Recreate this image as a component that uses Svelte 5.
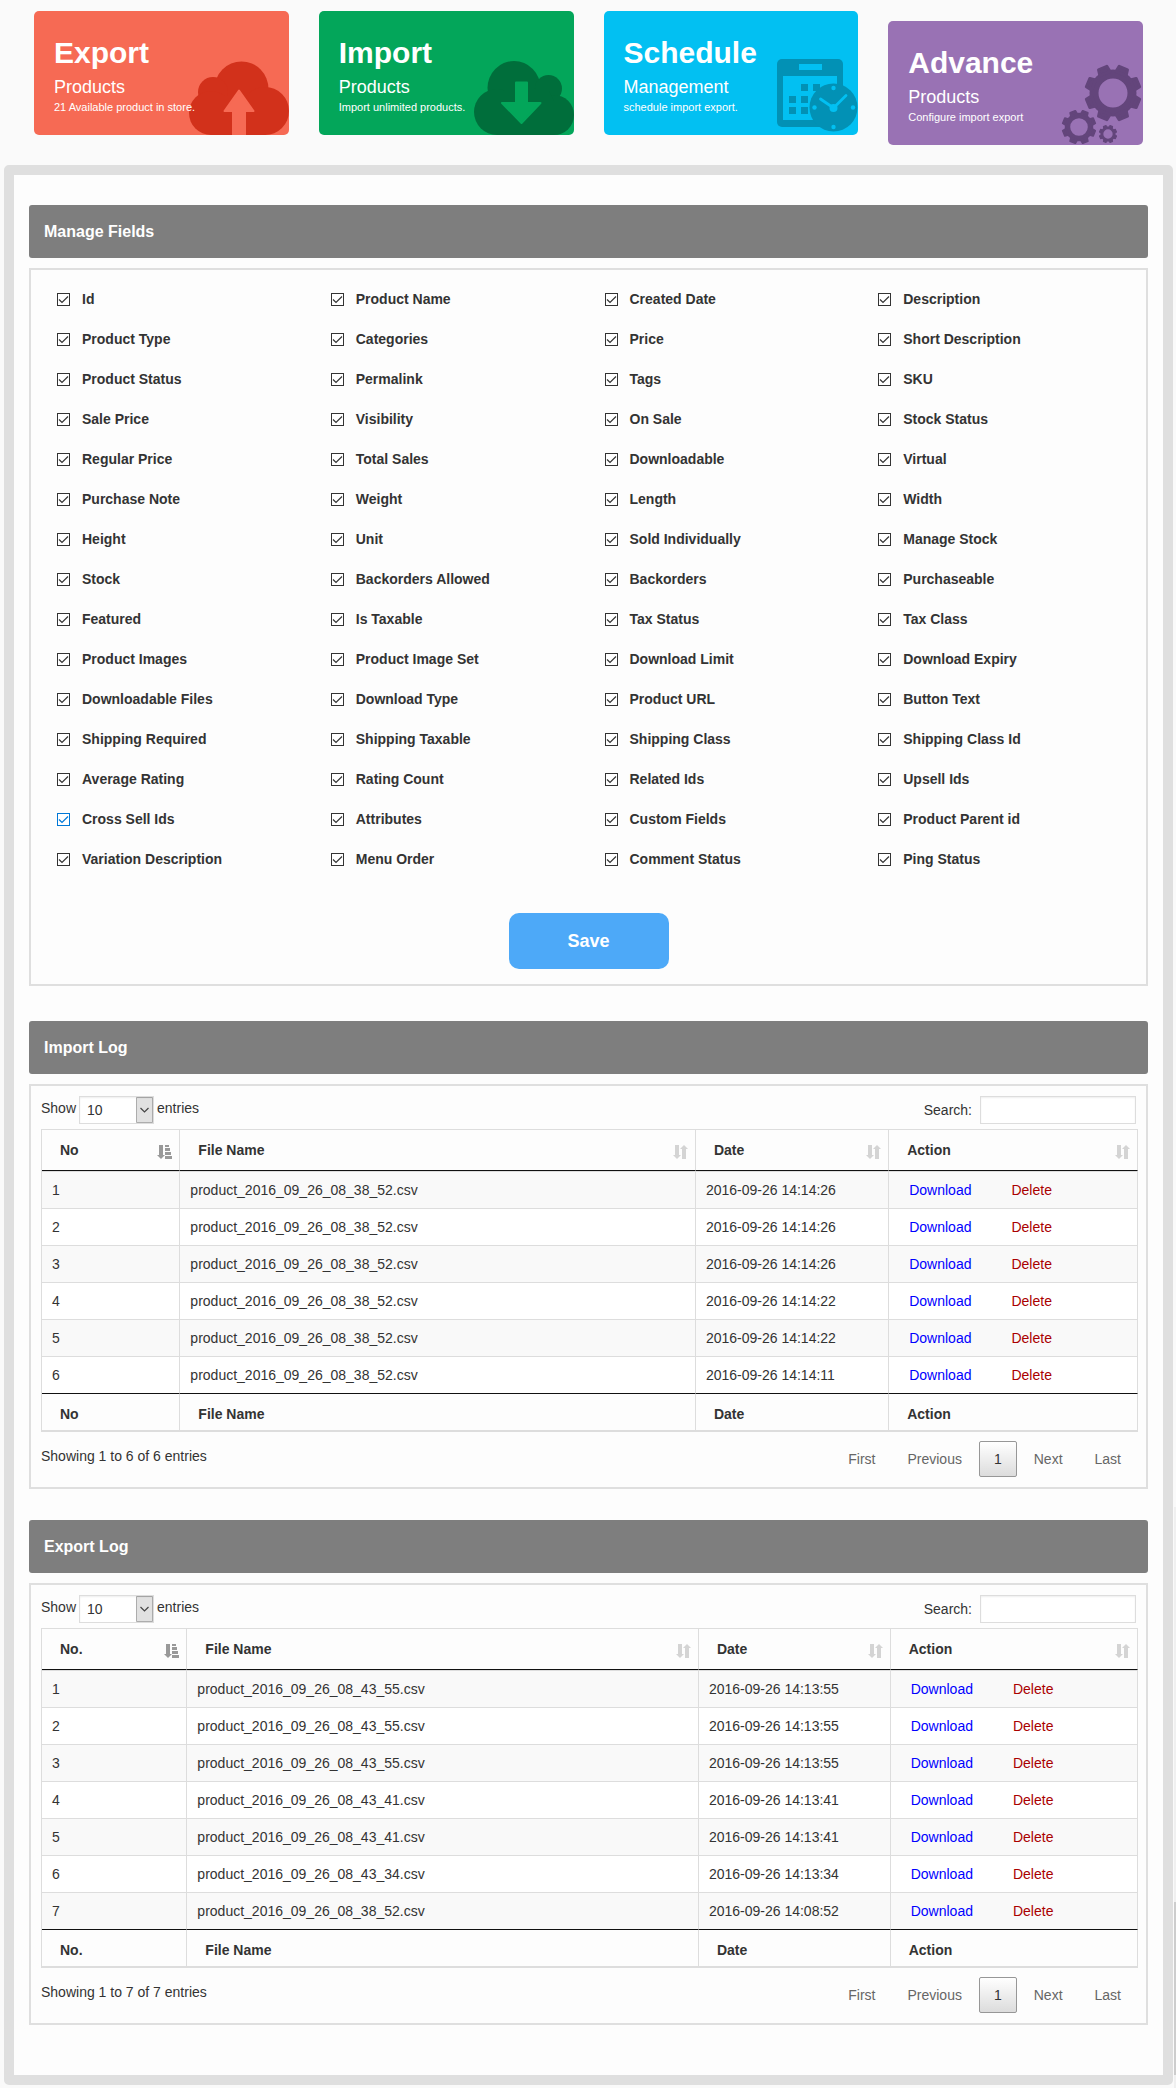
<script>
  const fields = [
    'Id', 'Product Name', 'Created Date', 'Description',
    'Product Type', 'Categories', 'Price', 'Short Description',
    'Product Status', 'Permalink', 'Tags', 'SKU',
    'Sale Price', 'Visibility', 'On Sale', 'Stock Status',
    'Regular Price', 'Total Sales', 'Downloadable', 'Virtual',
    'Purchase Note', 'Weight', 'Length', 'Width',
    'Height', 'Unit', 'Sold Individually', 'Manage Stock',
    'Stock', 'Backorders Allowed', 'Backorders', 'Purchaseable',
    'Featured', 'Is Taxable', 'Tax Status', 'Tax Class',
    'Product Images', 'Product Image Set', 'Download Limit', 'Download Expiry',
    'Downloadable Files', 'Download Type', 'Product URL', 'Button Text',
    'Shipping Required', 'Shipping Taxable', 'Shipping Class', 'Shipping Class Id',
    'Average Rating', 'Rating Count', 'Related Ids', 'Upsell Ids',
    'Cross Sell Ids', 'Attributes', 'Custom Fields', 'Product Parent id',
    'Variation Description', 'Menu Order', 'Comment Status', 'Ping Status'
  ];
  const activeField = 'Cross Sell Ids';

  const cards = [
    { kind: 'export', title: 'Export', sub: 'Products', note: '21 Available product in store.' },
    { kind: 'import', title: 'Import', sub: 'Products', note: 'Import unlimited products.' },
    { kind: 'schedule', title: 'Schedule', sub: 'Management', note: 'schedule import export.' },
    { kind: 'advance', title: 'Advance', sub: 'Products', note: 'Configure import export' }
  ];

  const logs = [
    {
      id: 'import',
      title: 'Import Log',
      columns: ['No', 'File Name', 'Date', 'Action'],
      shares: [277, 1032, 387, 498],
      rows: [
        ['product_2016_09_26_08_38_52.csv', '2016-09-26 14:14:26'],
        ['product_2016_09_26_08_38_52.csv', '2016-09-26 14:14:26'],
        ['product_2016_09_26_08_38_52.csv', '2016-09-26 14:14:26'],
        ['product_2016_09_26_08_38_52.csv', '2016-09-26 14:14:22'],
        ['product_2016_09_26_08_38_52.csv', '2016-09-26 14:14:22'],
        ['product_2016_09_26_08_38_52.csv', '2016-09-26 14:14:11']
      ]
    },
    {
      id: 'export',
      title: 'Export Log',
      columns: ['No.', 'File Name', 'Date', 'Action'],
      shares: [291, 1024, 384, 495],
      rows: [
        ['product_2016_09_26_08_43_55.csv', '2016-09-26 14:13:55'],
        ['product_2016_09_26_08_43_55.csv', '2016-09-26 14:13:55'],
        ['product_2016_09_26_08_43_55.csv', '2016-09-26 14:13:55'],
        ['product_2016_09_26_08_43_41.csv', '2016-09-26 14:13:41'],
        ['product_2016_09_26_08_43_41.csv', '2016-09-26 14:13:41'],
        ['product_2016_09_26_08_43_34.csv', '2016-09-26 14:13:34'],
        ['product_2016_09_26_08_38_52.csv', '2016-09-26 14:08:52']
      ]
    }
  ];

  const gears = [
    { x: 52, y: 30, r: 28 },
    { x: 18, y: 64, r: 17 },
    { x: 47, y: 71, r: 9 }
  ];
  const teeth = [22.5, 67.5, 112.5, 157.5, 202.5, 247.5, 292.5, 337.5];

  const share = (list, i) => (list[i] / list.reduce((a, b) => a + b, 0)) * 100;
</script>

<div class="page">
  <nav class="cards" aria-label="Sections">
    {#each cards as card}
      <a class="card {card.kind}" href="#{card.kind}">
        {#if card.kind === 'export'}
          <svg class="art" width="100" height="74" viewBox="0 0 100 74" aria-hidden="true">
            <g fill="#d2311b">
              <ellipse cx="52.500" cy="28" rx="27" ry="27.500" />
              <circle cx="24" cy="31" r="15" />
              <ellipse cx="22" cy="52" rx="22" ry="22" />
              <ellipse cx="76" cy="50" rx="24" ry="24" />
              <path d="M22 35h55v39H22z" />
            </g>
            <path d="M50 29.500 64.500 50H56v26H44V50h-8.500z" fill="#f66a54" stroke="#f66a54" stroke-width="2" stroke-linejoin="round" />
          </svg>
        {:else if card.kind === 'import'}
          <svg class="art" width="100" height="74" viewBox="0 0 100 74" aria-hidden="true">
            <g fill="#006e3b">
              <ellipse cx="40" cy="27" rx="26.500" ry="27" />
              <circle cx="74.500" cy="27.500" r="13.500" />
              <circle cx="23" cy="51" r="23" />
              <circle cx="80" cy="54" r="20" />
              <path d="M23 30h52l5 10v34H23z" />
            </g>
            <path d="M42 21.500h11V42h13.500L47.500 62 28 42h14z" fill="#03a65a" stroke="#03a65a" stroke-width="2" stroke-linejoin="round" />
          </svg>
        {:else if card.kind === 'schedule'}
          <svg class="art" width="81" height="77" viewBox="0 0 81 77" aria-hidden="true">
            <rect x="0" y="1" width="66" height="68" rx="5" fill="#0291b5" />
            <path d="M22 6h23v6H22zM6 18h54v44H6z" fill="#02c0f2" />
            <path d="M24 26h7v7h-7zM36 26h7v7h-7zM12 38h7v7h-7zM24 38h7v7h-7zM12 49h7v7h-7zM24 49h7v7h-7z" fill="#0291b5" />
            <circle cx="56.500" cy="49.500" r="24" fill="#0291b5" />
            <g fill="#02c0f2">
              <circle cx="56.500" cy="30" r="2.200" />
              <circle cx="56.500" cy="69" r="2.200" />
              <circle cx="37.500" cy="49.500" r="2.200" />
              <circle cx="76" cy="49.500" r="2.200" />
              <circle cx="56.500" cy="50" r="4" />
            </g>
            <path d="M43.500 41 56.500 50 69 37.500" fill="none" stroke="#02c0f2" stroke-width="2.800" stroke-linecap="round" />
          </svg>
        {:else}
          <svg class="art" width="82" height="82" viewBox="0 0 82 82" aria-hidden="true">
            {#each gears as gear}
              <g transform="translate({gear.x} {gear.y}) scale({gear.r / 28})">
                <circle r="19" fill="none" stroke="#63457b" stroke-width="9" />
                {#each teeth as angle}
                  <path d="M-5.500-21-4.500-27H4.500L5.500-21z" transform="rotate({angle})" fill="#63457b" stroke="#63457b" stroke-width="3" stroke-linejoin="round" />
                {/each}
              </g>
            {/each}
          </svg>
        {/if}
        <strong>{card.title}</strong>
        <span class="sub">{card.sub}</span>
        <span class="note">{card.note}</span>
      </a>
    {/each}
  </nav>

  <main class="frame">
    <section>
      <h2>Manage Fields</h2>
      <form class="box fields" onsubmit={(e) => e.preventDefault()}>
        <div class="grid">
          {#each fields as field}
            <label class="field">
              <input type="checkbox" class:active={field === activeField} checked />
              <span>{field}</span>
            </label>
          {/each}
        </div>
        <button class="save" type="submit">Save</button>
      </form>
    </section>

    {#each logs as log}
      <section>
        <h2>{log.title}</h2>
        <div class="box log">
          <div class="tools">
            <label class="length">
              <span>Show</span>
              <select>
                <option>10</option>
                <option>25</option>
                <option>50</option>
                <option>100</option>
              </select>
              <span>entries</span>
            </label>
            <label class="search">
              <span>Search:</span>
              <input type="search" />
            </label>
          </div>
          <table>
            <colgroup>
              {#each log.columns as _, i}
                <col style="width: {share(log.shares, i)}%" />
              {/each}
            </colgroup>
            <thead>
              <tr>
                {#each log.columns as column, i}
                  <th scope="col">
                    <button class="sort" type="button">
                      <span>{column}</span>
                      {#if i === 0}
                        <svg width="15" height="18" viewBox="0 0 15 18" fill="#999" aria-hidden="true">
                          <path d="M2 4h4v10h2l-4 4-4-4h2zM8 4h4v2H8zM8 7h5v3H8zM8 11h6v3H8zM8 15h7v3H8z" />
                        </svg>
                      {:else}
                        <svg width="15" height="18" viewBox="0 0 15 18" fill="#d4d4d4" aria-hidden="true">
                          <path d="M2 4h4v10h2l-4 4-4-4h2zM11 4l4 4h-2v10H9V8H7z" />
                        </svg>
                      {/if}
                    </button>
                  </th>
                {/each}
              </tr>
            </thead>
            <tbody>
              {#each log.rows as row, i}
                <tr>
                  <td>{i + 1}</td>
                  <td>{row[0]}</td>
                  <td>{row[1]}</td>
                  <td>
                    <div class="actions">
                      <a class="download" href="#download">Download</a>
                      <a class="delete" href="#delete">Delete</a>
                    </div>
                  </td>
                </tr>
              {/each}
            </tbody>
            <tfoot>
              <tr>
                {#each log.columns as column}
                  <th scope="col">{column}</th>
                {/each}
              </tr>
            </tfoot>
          </table>
          <div class="foot">
            <span class="info">Showing 1 to {log.rows.length} of {log.rows.length} entries</span>
            <div class="pager">
              <button type="button">First</button>
              <button type="button">Previous</button>
              <button type="button" class="current" aria-current="page">1</button>
              <button type="button">Next</button>
              <button type="button">Last</button>
            </div>
          </div>
        </div>
      </section>
    {/each}
  </main>
  <div class="track" aria-hidden="true"><div class="thumb"></div></div>
</div>

<style>
  :global(body) {
    background: #fafafa;
  }
  .page, .page * {
    box-sizing: border-box;
  }
  .page {
    position: relative;
    padding: 11px 3px 3px 4px;
    font-family: "Liberation Sans", Arial, sans-serif;
    font-size: 14px;
    line-height: 20px;
    color: #333;
  }
  button, input, select {
    font: inherit;
    color: inherit;
    margin: 0;
  }
  .cards {
    display: grid;
    grid-template-columns: repeat(4, 1fr);
    align-items: start;
    gap: 30px;
    padding: 0 30px 20px;
  }
  .card {
    position: relative;
    display: flex;
    flex-direction: column;
    height: 124px;
    padding: 22px 20px 0;
    border-radius: 5px;
    overflow: hidden;
    color: #fff;
    text-decoration: none;
  }
  .export { background: #f66a54; }
  .import { background: #03a65a; }
  .schedule { background: #02c0f2; }
  .advance { background: #9972b4; margin-top: 10px; }
  .art {
    position: absolute;
    right: 0;
    bottom: 0;
  }
  .card strong {
    font-size: 30px;
    line-height: 40px;
  }
  .sub {
    font-size: 18px;
    line-height: 28px;
  }
  .note {
    position: relative;
    font-size: 11px;
    line-height: 12px;
  }
  .frame {
    border: 10px solid #dfdfdf;
    border-radius: 5px;
    background: #fdfdfd;
    padding: 30px 15px 50px;
  }
  section + section {
    margin-top: 31px;
  }
  section:first-child {
    margin-bottom: 35px;
  }
  section:first-child + section {
    margin-top: 0;
  }
  h2 {
    margin: 0 0 10px;
    padding: 0 15px;
    border-radius: 3px;
    background: #7e7e7e;
    color: #fff;
    font-size: 16px;
    line-height: 53px;
  }
  .box {
    border: 2px solid #dfdfdf;
  }
  .fields {
    display: flex;
    flex-direction: column;
    align-items: center;
    padding: 9px 10px 15px;
  }
  .grid {
    display: grid;
    grid-template-columns: repeat(4, 1fr);
    align-self: stretch;
  }
  .field {
    display: flex;
    align-items: center;
    gap: 12px;
    height: 40px;
    padding-left: 16px;
    font-weight: bold;
  }
  .field input {
    appearance: none;
    width: 13px;
    height: 13px;
    border: 1px solid #333;
    background: #fff url("data:image/svg+xml,%3Csvg xmlns='http://www.w3.org/2000/svg' viewBox='0 0 11 11'%3E%3Cpath d='M1 5.500 4 8.500 10 2.500' fill='none' stroke='%23333' stroke-width='1.200'/%3E%3C/svg%3E") center / 11px 11px no-repeat;
  }
  .field input.active {
    border-color: #0078d7;
    background-image: url("data:image/svg+xml,%3Csvg xmlns='http://www.w3.org/2000/svg' viewBox='0 0 11 11'%3E%3Cpath d='M1 5.500 4 8.500 10 2.500' fill='none' stroke='%230078d7' stroke-width='1.200'/%3E%3C/svg%3E");
  }
  .save {
    width: 160px;
    height: 56px;
    margin-top: 34px;
    border: 0;
    border-radius: 10px;
    background: #4da9f8;
    color: #fff;
    font-size: 18px;
    font-weight: bold;
  }
  .log {
    padding: 10px 8px 10px 10px;
  }
  .tools, .foot {
    display: flex;
    justify-content: space-between;
    align-items: flex-start;
  }
  .tools {
    padding: 0 2px 5px 0;
  }
  .length {
    display: flex;
    gap: 3px;
    line-height: 24px;
  }
  .search {
    display: flex;
    align-items: center;
    gap: 8px;
  }
  select, .search input {
    appearance: none;
    height: 28px;
    border: 1px solid #ddd;
    border-radius: 0;
    background: #fff;
    box-shadow: inset 0 1px 2px rgba(0, 0, 0, 0.07);
  }
  select {
    width: 75px;
    padding: 0 20px 0 7px;
    background: #fff url("data:image/svg+xml,%3Csvg xmlns='http://www.w3.org/2000/svg' width='17' height='26'%3E%3Cpath d='M.5.5h16v25H.5z' fill='%23e1e1e1' stroke='%23adadad'/%3E%3Cpath d='M4.500 11 8.500 15 12.500 11' fill='none' stroke='%23444' stroke-width='1.200'/%3E%3C/svg%3E") right center no-repeat;
  }
  .search input {
    width: 156px;
    padding: 0 6px;
  }
  table {
    width: 100%;
    table-layout: fixed;
    border-collapse: separate;
    border-spacing: 0;
    border: 1px solid #ddd;
    border-width: 1px 0 2px 1px;
  }
  th, td {
    padding: 0 10px;
    border-right: 1px solid #ddd;
    text-align: left;
  }
  td {
    height: 37px;
    border-top: 1px solid #ddd;
  }
  tbody tr {
    background: #fff;
  }
  tbody tr:nth-child(odd) {
    background: #f9f9f9;
  }
  thead th {
    height: 41px;
    padding: 0;
    border-bottom: 1px solid #111;
  }
  tfoot th {
    height: 37px;
    padding: 4px 18px 0;
    border-top: 1px solid #111;
  }
  .sort {
    display: flex;
    justify-content: space-between;
    align-items: center;
    width: 100%;
    height: 40px;
    padding: 0 7px 0 18px;
    border: 0;
    background: none;
    font-weight: bold;
  }
  .actions {
    display: flex;
    gap: 40px;
    padding-left: 10px;
  }
  a {
    text-decoration: none;
  }
  .download { color: #00f; }
  .delete { color: #a00; }
  .foot {
    padding: 9px 2px 0 0;
  }
  .info {
    line-height: 30px;
  }
  .pager {
    display: flex;
    gap: 2px;
  }
  .pager button {
    height: 36px;
    padding: 0 14px;
    border: 1px solid transparent;
    border-radius: 2px;
    background: none;
    color: #666;
  }
  .pager .current {
    border-color: #979797;
    background: linear-gradient(#fff, #dcdcdc);
    color: #333;
  }
  .track {
    position: absolute;
    right: 0;
    bottom: 0;
    width: 2px;
    height: 581px;
    padding-top: 395px;
    background: #f0f0f0;
  }
  .thumb {
    height: 173px;
    background: #cdcdcd;
  }
</style>
